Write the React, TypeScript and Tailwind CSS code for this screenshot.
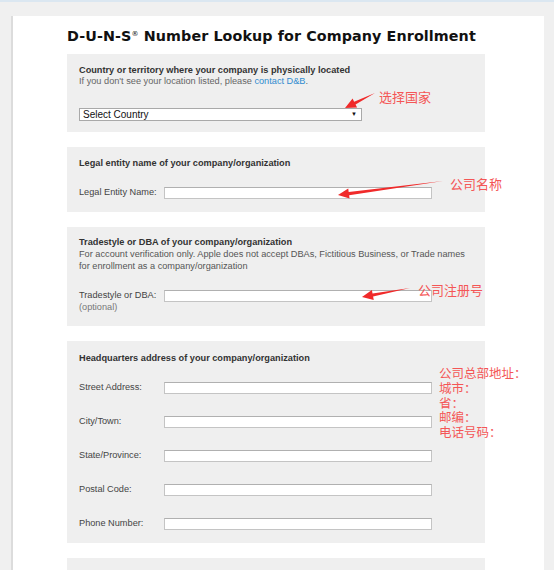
import React from "react";

function Arrow({ x1, y1, x2, y2 }: { x1: number; y1: number; x2: number; y2: number }) {
  const dx = x2 - x1;
  const dy = y2 - y1;
  const len = Math.hypot(dx, dy);
  const ux = dx / len;
  const uy = dy / len;
  const nx = -uy;
  const ny = ux;
  const headLen = 11;
  const headW = 5;
  const shaftW = 1.6;
  const bx = x2 - ux * headLen;
  const by = y2 - uy * headLen;
  const pts = [
    [x1, y1],
    [bx + nx * shaftW, by + ny * shaftW],
    [bx + nx * headW, by + ny * headW],
    [x2, y2],
    [bx - nx * headW, by - ny * headW],
    [bx - nx * shaftW, by - ny * shaftW],
  ]
    .map((p) => p.join(","))
    .join(" ");
  return <polygon points={pts} fill="#f02a2a" />;
}

function Input() {
  return <div className="h-[12px] w-[268px] border border-[#c4c4c4] border-t-[#b0b0b0] bg-white" />;
}

function Row({ label, optional }: { label: string; optional?: boolean }) {
  return (
    <div className="flex items-start">
      <div className="w-[85px] -mt-[1px] leading-[12px] text-[#444]">
        <div>{label}</div>
        {optional && <div className="text-[#777]">(optional)</div>}
      </div>
      <Input />
    </div>
  );
}

export default function App() {
  return (
    <div
      className="relative w-[554px] h-[570px] overflow-hidden bg-[#f0f0f0] border-t-2 border-[#dbe7f1]"
      style={{ fontFamily: '"Liberation Sans", Arial, sans-serif' }}
    >
      <div className="ml-[11px] mt-[14px] w-[533px] h-[600px] bg-white border-l-2 border-[#dcdcdc]">
        <div className="pl-[54px] pt-[10px]">
          <h1
            className="h-[20px] text-[14.3px] font-bold text-[#111] leading-[20px] tracking-[0.1px]"
            style={{ fontFamily: '"DejaVu Sans", Verdana, sans-serif' }}
          >
            D-U-N-S<span className="text-[7px] leading-[0] font-normal relative -top-[5px]">®</span> Number Lookup for Company Enrollment
          </h1>
          <div className="mt-[8px] w-[418px] flex flex-col gap-[15px] text-[9.2px]">
            <div className="bg-[#efefef] pl-[12px] pt-[10px] pb-[11px]">
              <div className="leading-[12px] font-bold text-[#333]">
                Country or territory where your company is physically located
              </div>
              <div className="leading-[11px] text-[#666]">
                If you don't see your location listed, please <span className="text-[#2e8bd0]">contact D&amp;B</span>.
              </div>
              <div className="mt-[21px] h-[13px] w-[283px] border border-[#a9a9a9] bg-white flex items-center justify-between pl-[3px] pr-[4px] text-[10px] leading-[11px] text-[#111]">
                <span>Select Country</span>
                <span className="text-[6px]">▼</span>
              </div>
            </div>

            <div className="bg-[#efefef] pl-[12px] pt-[10px] pb-[13px]">
              <div className="leading-[12px] font-bold text-[#333]">Legal entity name of your company/organization</div>
              <div className="mt-[18px]">
                <Row label="Legal Entity Name:" />
              </div>
            </div>

            <div className="bg-[#efefef] pl-[12px] pt-[9px] pb-[13px]">
              <div className="leading-[12px] font-bold text-[#333]">Tradestyle or DBA of your company/organization</div>
              <div className="leading-[12px] text-[#555] w-[398px]">
                For account verification only. Apple does not accept DBAs, Fictitious Business, or Trade names for enrollment as a company/organization
              </div>
              <div className="mt-[18px]">
                <Row label="Tradestyle or DBA:" optional />
              </div>
            </div>

            <div className="bg-[#efefef] pl-[12px] pt-[11px] pb-[13px]">
              <div className="leading-[12px] font-bold text-[#333]">Headquarters address of your company/organization</div>
              <div className="mt-[18px] flex flex-col gap-[22px]">
                <Row label="Street Address:" />
                <Row label="City/Town:" />
                <Row label="State/Province:" />
                <Row label="Postal Code:" />
                <Row label="Phone Number:" />
              </div>
            </div>

            <div className="bg-[#efefef] h-[40px]" />
          </div>
        </div>
      </div>

      <svg className="absolute left-0 top-0" width="554" height="570" viewBox="0 0 554 570">
        <Arrow x1={375} y1={91} x2={345} y2={106} />
        <Arrow x1={443} y1={179} x2={338} y2={193} />
        <Arrow x1={410} y1={286} x2={362} y2={295} />
      </svg>

      <div
        className="absolute text-[13px] leading-[15px] text-[#f45656]"
        style={{ fontFamily: '"Noto Sans CJK SC", sans-serif', left: 379, top: 87 }}
      >
        选择国家
      </div>
      <div
        className="absolute text-[13px] leading-[15px] text-[#f45656]"
        style={{ fontFamily: '"Noto Sans CJK SC", sans-serif', left: 450, top: 174 }}
      >
        公司名称
      </div>
      <div
        className="absolute text-[13px] leading-[15px] text-[#f45656]"
        style={{ fontFamily: '"Noto Sans CJK SC", sans-serif', left: 418, top: 280 }}
      >
        公司注册号
      </div>
      <div
        className="absolute text-[12.5px] leading-[14.8px] text-[#f45656]"
        style={{ fontFamily: '"Noto Sans CJK SC", sans-serif', left: 439, top: 364 }}
      >
        <div>公司总部地址：</div>
        <div>城市：</div>
        <div>省：</div>
        <div>邮编：</div>
        <div>电话号码：</div>
      </div>
    </div>
  );
}
